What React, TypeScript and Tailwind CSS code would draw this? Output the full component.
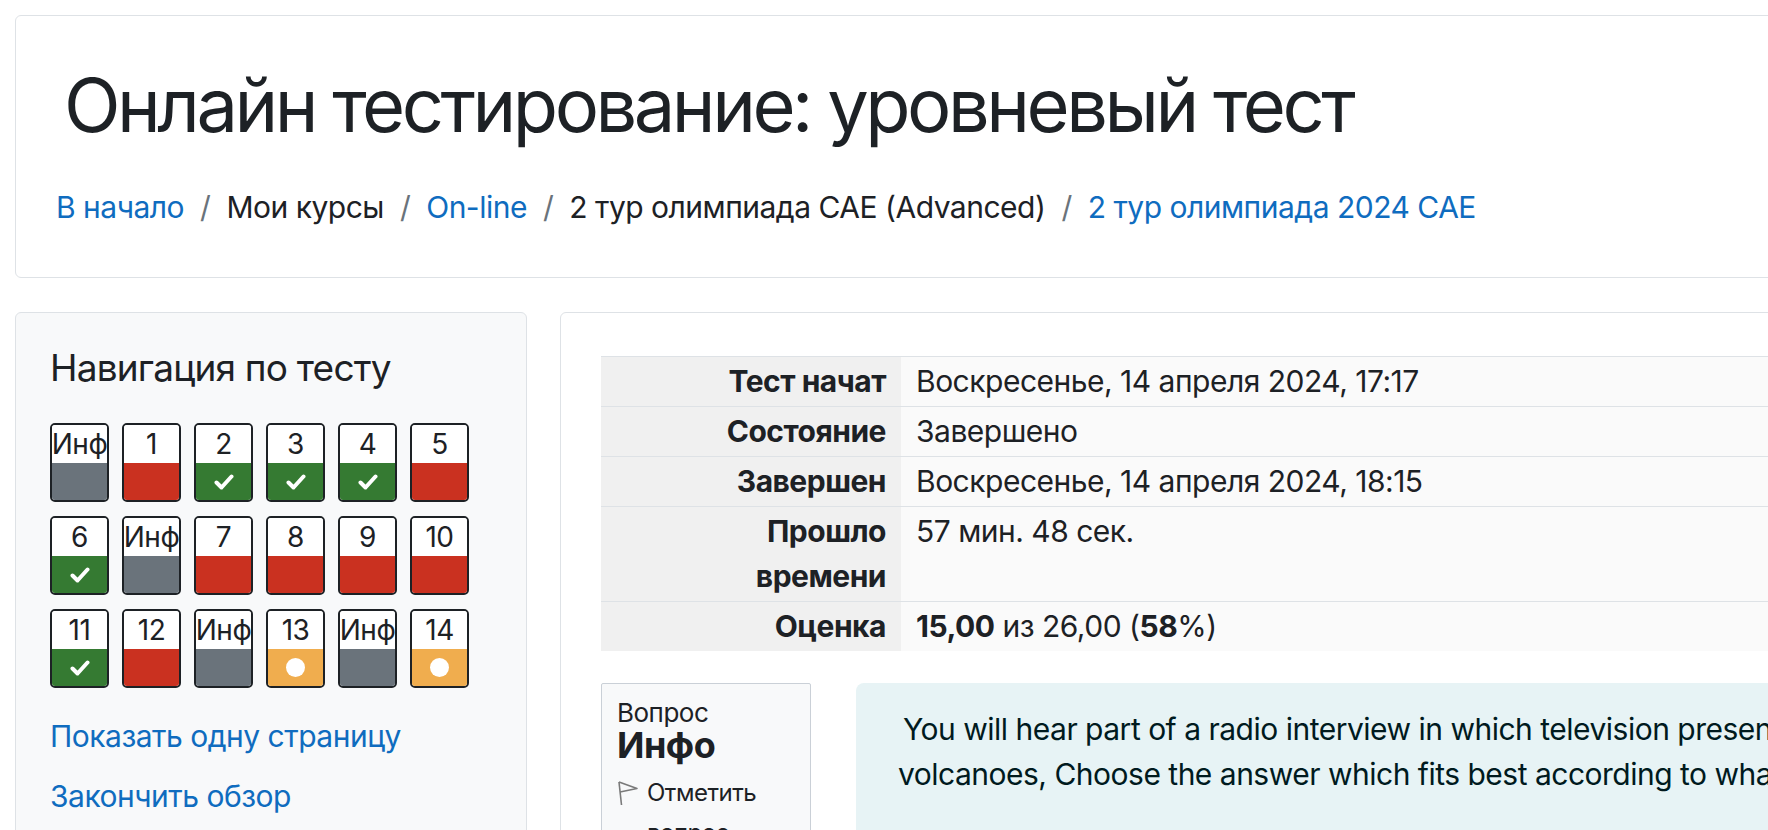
type Btn = { label: string; state: "info" | "wrong" | "right" | "partial" };

const rows: Btn[][] = [
  [
    { label: "Инф", state: "info" },
    { label: "1", state: "wrong" },
    { label: "2", state: "right" },
    { label: "3", state: "right" },
    { label: "4", state: "right" },
    { label: "5", state: "wrong" },
  ],
  [
    { label: "6", state: "right" },
    { label: "Инф", state: "info" },
    { label: "7", state: "wrong" },
    { label: "8", state: "wrong" },
    { label: "9", state: "wrong" },
    { label: "10", state: "wrong" },
  ],
  [
    { label: "11", state: "right" },
    { label: "12", state: "wrong" },
    { label: "Инф", state: "info" },
    { label: "13", state: "partial" },
    { label: "Инф", state: "info" },
    { label: "14", state: "partial" },
  ],
];

const stateBg = {
  info: "bg-[#6a737b]",
  wrong: "bg-[#ca3120]",
  right: "bg-[#357a32]",
  partial: "bg-[#f0ad4e]",
};

function NavButton({ b }: { b: Btn }) {
  return (
    <div className="w-[59px] h-[79px] border-2 border-[#1d2125] rounded-[5px] overflow-hidden flex flex-col">
      <div className="h-[38px] bg-white flex items-center justify-center text-[28px] leading-[38px] whitespace-nowrap">
        {b.label}
      </div>
      <div className={`flex-1 flex items-center justify-center ${stateBg[b.state]}`}>
        {b.state === "right" && (
          <svg width="20" height="16" viewBox="0 0 20 16">
            <path d="M2.5 8.5 L7.5 13.5 L17.5 2.5" stroke="white" strokeWidth="4" fill="none" strokeLinecap="round" strokeLinejoin="round" />
          </svg>
        )}
        {b.state === "partial" && <span className="w-[19px] h-[19px] rounded-full bg-white" />}
      </div>
    </div>
  );
}

function Crumb({ text, link, last }: { text: string; link?: boolean; last?: boolean }) {
  return (
    <>
      <span className={link ? "text-[#0f6cbf]" : ""}>{text}</span>
      {!last && <span className="px-[16px] text-[#6a737b]">/</span>}
    </>
  );
}

const summary: [string, React.ReactNode][] = [
  ["Тест начат", "Воскресенье, 14 апреля 2024, 17:17"],
  ["Состояние", "Завершено"],
  ["Завершен", "Воскресенье, 14 апреля 2024, 18:15"],
  ["Прошло времени", "57 мин. 48 сек."],
  [
    "Оценка",
    <>
      <b>15,00</b> из 26,00 (<b>58</b>%)
    </>,
  ],
];

export default function App() {
  return (
    <div className="w-[1768px] h-[830px] overflow-hidden bg-white font-[Inter,sans-serif] text-[#1d2125] tracking-[-0.5px]">
      <div className="w-[2400px] pl-[15px] pt-[15px]">
        <header className="rounded-[6px] border border-[#dee2e6] pl-[40px] pt-[44px] pb-[47px]">
          <h1 className="pl-[8px] text-[74px] leading-[90px] font-normal tracking-[-3.5px]">
            Онлайн тестирование: уровневый тест
          </h1>
          <nav className="mt-[35px] flex items-center text-[30px] leading-[45px]">
            <Crumb text="В начало" link />
            <Crumb text="Мои курсы" />
            <Crumb text="On-line" link />
            <Crumb text="2 тур олимпиада CAE (Advanced)" />
            <Crumb text="2 тур олимпиада 2024 CAE" link last />
          </nav>
        </header>

        <div className="mt-[34px] flex items-start gap-[33px]">
          <aside className="w-[512px] shrink-0 rounded-[6px] border border-[#dee2e6] bg-[#f8f9fa] px-[32px] pt-[32px] pb-[40px]">
            <h5 className="pl-[2px] text-[37px] leading-[45px] tracking-[-0.8px]">Навигация по тесту</h5>
            <div className="mt-[33px] flex flex-col gap-[14px]">
              {rows.map((r, i) => (
                <div key={i} className="flex gap-[13px] pl-[2px]">
                  {r.map((b, j) => (
                    <NavButton key={j} b={b} />
                  ))}
                </div>
              ))}
            </div>
            <div className="mt-[26px] flex flex-col gap-[15px] pl-[2px] text-[30px] leading-[45px] text-[#0f6cbf]">
              <span>Показать одну страницу</span>
              <span>Закончить обзор</span>
            </div>
          </aside>

          <main className="flex-1 rounded-[6px] border border-[#dee2e6] bg-white pl-[40px] pt-[43px] pb-[40px]">
            <table className="w-full border-collapse text-[30px] leading-[45px]">
              <tbody>
                {summary.map(([k, v]) => (
                  <tr key={k} className="border-t border-[#dee2e6]">
                    <th className="w-[300px] bg-[#f0f0f0] py-[2px] pr-[15px] pl-[30px] text-right align-top font-bold">
                      {k}
                    </th>
                    <td className="bg-[#fafafa] py-[2px] pl-[15px] align-top">{v}</td>
                  </tr>
                ))}
              </tbody>
            </table>

            <div className="mt-[32px] flex items-start gap-[45px]">
              <div className="w-[210px] shrink-0 rounded-[2px] border border-[#cad0d7] bg-[#f8f9fa] p-[15px] pb-[40px]">
                <div className="text-[26px] leading-[28px]">Вопрос</div>
                <div className="text-[36px] leading-[36px] font-bold">Инфо</div>
                <div className="mt-[10px] flex items-start gap-[8px] text-[24px] leading-[40px]">
                  <svg width="22" height="26" viewBox="0 0 22 26" className="mt-[7px] shrink-0">
                    <path d="M2 2 L4.5 25" stroke="#7a7a7a" strokeWidth="1.6" fill="none" />
                    <path d="M2 2 L20 8.5 L3 12" stroke="#7a7a7a" strokeWidth="1.6" fill="none" strokeLinejoin="round" />
                  </svg>
                  <span>Отметить вопрос</span>
                </div>
              </div>
              <div className="flex-1 rounded-[8px] bg-[#e7f3f5] pl-[42px] pt-[24px] pb-[60px] text-[30px] leading-[45px] text-[#001a1e]">
                <div className="whitespace-nowrap pl-[5px]">
                  You will hear part of a radio interview in which television presenter Sarah Bell talks about
                </div>
                <div className="whitespace-nowrap">
                  volcanoes, Choose the answer which fits best according to what you hear.
                </div>
              </div>
            </div>
          </main>
        </div>
      </div>
    </div>
  );
}
